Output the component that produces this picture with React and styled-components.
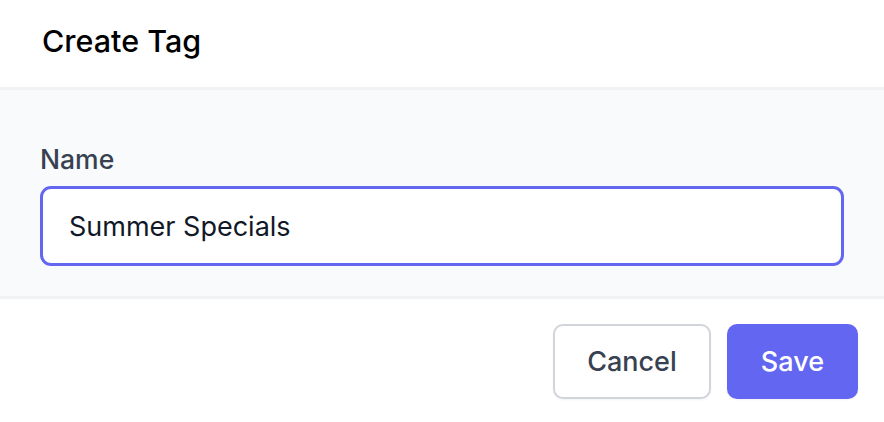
import React from "react";
import styled, { createGlobalStyle } from "styled-components";

const GlobalStyle = createGlobalStyle`
  html, body {
    margin: 0;
    padding: 0;
    background: #ffffff;
    font-family: Inter, "Liberation Sans", sans-serif;
  }
  * {
    box-sizing: border-box;
  }
`;

const Modal = styled.div`
  width: 884px;
  height: 422px;
  display: flex;
  flex-direction: column;
  background: #ffffff;
  overflow: hidden;
`;

const Header = styled.div`
  height: 90px;
  display: flex;
  align-items: center;
  padding: 0 40px 6px 42px;
  border-bottom: 3px solid #f1f2f4;
`;

const Title = styled.h2`
  margin: 0;
  font-size: 30.5px;
  font-weight: 450;
  color: #000000;
`;

const Body = styled.div`
  background: #f9fafb;
  padding: 54px 40px 30px;
  border-bottom: 3px solid #f1f2f4;
  display: flex;
  flex-direction: column;
  gap: 12px;
`;

const Label = styled.label`
  font-size: 26.5px;
  font-weight: 500;
  color: #374151;
  line-height: 30px;
`;

const Input = styled.input`
  width: 100%;
  height: 80px;
  border: 3px solid #6366f1;
  border-radius: 11px;
  background: #ffffff;
  padding: 0 26px;
  font-family: inherit;
  font-size: 27px;
  color: #111827;
  outline: none;
`;

const Footer = styled.div`
  display: flex;
  justify-content: flex-end;
  gap: 16px;
  padding: 25px 26px 0;
`;

const Button = styled.button`
  height: 75px;
  padding: 0 32px;
  border-radius: 10px;
  font-family: inherit;
  font-size: 27px;
  font-weight: 500;
  cursor: pointer;
  border: ${(p) => (p.primary ? "2px solid transparent" : "2px solid #d1d5db")};
  background: ${(p) => (p.primary ? "#6366f1" : "#ffffff")};
  color: ${(p) => (p.primary ? "#ffffff" : "#374151")};
  box-shadow: 0 1px 2px rgba(0, 0, 0, 0.05);
`;

export default function App() {
  return (
    <>
      <GlobalStyle />
      <Modal>
        <Header>
          <Title>Create Tag</Title>
        </Header>
        <Body>
          <Label htmlFor="tag-name">Name</Label>
          <Input id="tag-name" defaultValue="Summer Specials" />
        </Body>
        <Footer>
          <Button>Cancel</Button>
          <Button primary>Save</Button>
        </Footer>
      </Modal>
    </>
  );
}
